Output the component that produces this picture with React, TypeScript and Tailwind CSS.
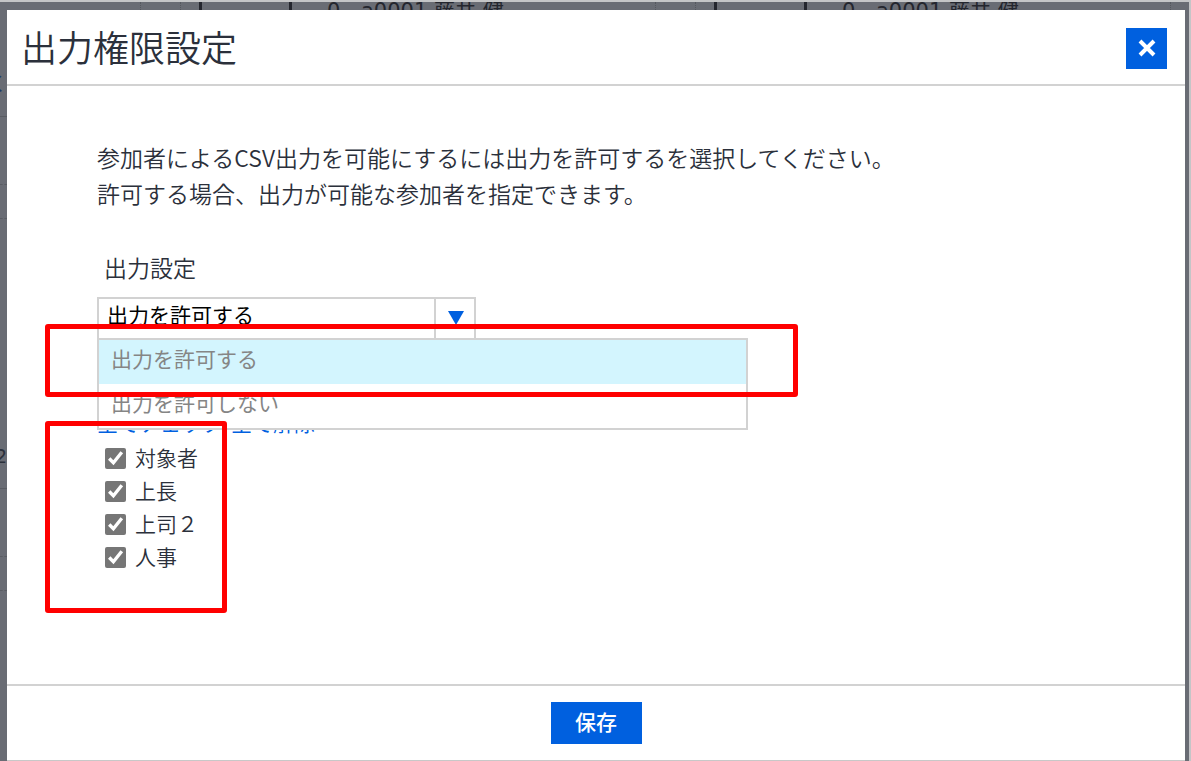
import {useState} from 'react';
import type {ReactNode} from 'react';

const outputOptions = ['出力を許可する', '出力を許可しない'];
const participants = ['対象者', '上長', '上司２', '人事'];

const BackgroundCells = () => (
  <div className="flex w-[515px] shrink-0 border-l border-dotted border-[#55585f]">
    <div className="w-10 shrink-0 border-r border-dotted border-[#55585f]" />
    <div className="ml-[18px] w-[93px] shrink-0 border-x-3 border-[#24262e]" />
    <div className="ml-[35px] w-[34px] shrink-0">0</div>
    <div className="whitespace-nowrap">a0001 藤井 健</div>
  </div>
);

const GutterRow = ({children}: {children: ReactNode}) => (
  <>
    <div className="flex h-16 items-center justify-end border-b border-[#595c63]">{children}</div>
    <div className="h-17 border-b border-dashed border-[#595c63]" />
    <div className="h-[34px] border-b border-dashed border-[#595c63]" />
  </>
);

const Highlight = ({className}: {className: string}) => (
  <div className={`pointer-events-none absolute z-20 rounded-[3px] border-5 border-[#ff0000] ${className}`} />
);

const OutputSelect = () => {
  const [value, setValue] = useState(outputOptions[0]);

  return (
    <div className="relative mt-[10px]">
      <div className="relative h-[43px] w-[379px]">
        <select
          id="output"
          value={value}
          onChange={(e) => setValue(e.target.value)}
          className="h-full w-full appearance-none border-2 border-[#d2d2d2] bg-white pb-1 pl-2 text-[21px] text-black outline-none"
        >
          {outputOptions.map((option) => (
            <option key={option}>{option}</option>
          ))}
        </select>
        <div className="pointer-events-none absolute inset-y-0 right-0 flex w-[42px] items-center justify-center border-l-2 border-[#d2d2d2] pb-[2px]">
          <svg width="16" height="14" viewBox="0 0 16 14" className="fill-[#0060df]">
            <path d="M0 0h16L8 14z" />
          </svg>
        </div>
      </div>
      <ul role="listbox" className="absolute top-[41px] left-0 z-10 w-[651px] border-2 border-[#d2d2d2] bg-white">
        {outputOptions.map((option) => (
          <li
            key={option}
            role="option"
            aria-selected={option === value}
            onClick={() => setValue(option)}
            className="h-11 pl-3 text-[21px] leading-10 text-[#858585] aria-selected:bg-[#d3f5fe]"
          >
            {option}
          </li>
        ))}
      </ul>
      <Highlight className="top-[27px] -left-[52px] h-[73px] w-[753px]" />
    </div>
  );
};

const App = () => {
  const [checked, setChecked] = useState(participants);

  const toggle = (name: string) =>
    setChecked((prev) => (prev.includes(name) ? prev.filter((v) => v !== name) : [...prev, name]));

  return (
    <div className="flex h-screen min-h-[640px] flex-col overflow-hidden border-t-2 border-r-2 border-[#c4c5c7] bg-[#696c74] font-['DejaVu_Sans','Noto_Sans_CJK_JP',sans-serif] text-[#2b303b]">
      <div className="flex h-2 shrink-0 overflow-hidden pl-[140px] text-[21px] leading-[18px] text-[#24262e]">
        <BackgroundCells />
        <BackgroundCells />
        <BackgroundCells />
      </div>

      <div className="flex flex-1 pr-1">
        <div className="w-[7px] shrink-0 overflow-hidden pt-[43px] text-[19px]">
          <GutterRow>
            <span className="text-[#1f3a66]">く</span>
          </GutterRow>
          <div className="h-[206px]" />
          <GutterRow>2</GutterRow>
        </div>

        <div role="dialog" aria-labelledby="title" className="flex flex-1 flex-col border-b border-[#c8c8c8] bg-white">
          <header className="flex h-[76px] items-center justify-between border-b-2 border-[#d2d2d2] pt-[2px] pr-[18px] pl-[14px]">
            <h1 id="title" className="pt-1 text-[36px] font-[350]">
              出力権限設定
            </h1>
            <button aria-label="閉じる" className="flex size-[41px] items-center justify-center bg-[#0060df]">
              <svg width="18" height="18" viewBox="0 0 18 18" className="stroke-white" strokeWidth="4">
                <path d="M2 2l14 14M16 2L2 16" />
              </svg>
            </button>
          </header>

          <main className="flex-1 pt-[53px] pl-[90px]">
            <p className="font-['Noto_Sans_CJK_JP',sans-serif] text-[23px] leading-9 font-[350]">
              参加者によるCSV出力を可能にするには出力を許可するを選択してください。
              <br />
              許可する場合、出力が可能な参加者を指定できます。
            </p>

            <label htmlFor="output" className="mt-10 block pl-[7px] text-[23px] leading-9 font-[350]">
              出力設定
            </label>
            <OutputSelect />

            <div className="mt-[66px] flex gap-2 text-[21px] leading-9 text-[#0060df]">
              <a href="#all" onClick={() => setChecked(participants)}>
                全てチェック
              </a>
              <a href="#none" onClick={() => setChecked([])}>
                全て解除
              </a>
            </div>
            <div className="relative pl-2">
              {participants.map((name) => (
                <label key={name} className="flex h-[33px] w-fit items-center gap-[9px] text-[21px] leading-8 font-[350]">
                  <input
                    type="checkbox"
                    checked={checked.includes(name)}
                    onChange={() => toggle(name)}
                    className="size-[21px] accent-[#767676]"
                  />
                  {name}
                </label>
              ))}
              <Highlight className="-top-[21px] -left-[52px] h-[192px] w-[182px]" />
            </div>
          </main>

          <footer className="flex h-[76px] items-center justify-center border-t-2 border-[#d2d2d2]">
            <button className="h-[42px] w-[91px] bg-[#0060df] pt-[2px] text-[21px] font-medium text-white">保存</button>
          </footer>
        </div>
      </div>
    </div>
  );
};

export default App;
